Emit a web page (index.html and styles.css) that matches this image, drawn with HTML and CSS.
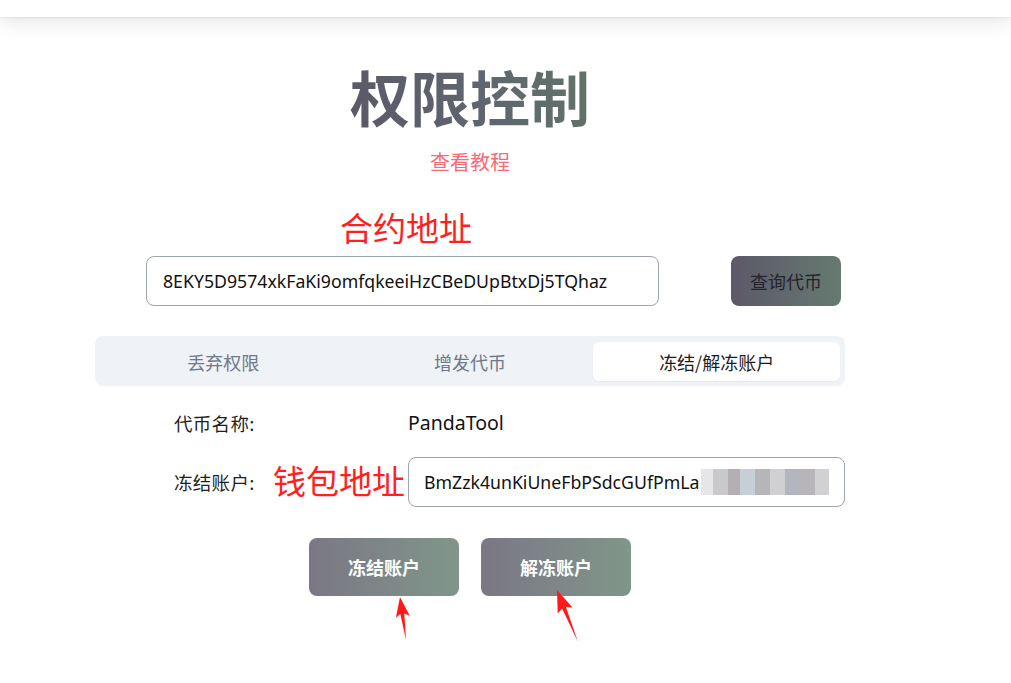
FILE: index.html
```html
<!DOCTYPE html>
<html lang="zh-CN">
<head>
<meta charset="utf-8">
<title>权限控制</title>
<link rel="stylesheet" href="styles.css">
</head>
<body>
<header class="topbar"></header>
<main class="page">
  <h1 class="title">权限控制</h1>
  <a class="tutorial">查看教程</a>

  <div class="query-row">
    <span class="note note-contract">合约地址</span>
    <div class="field field-contract">8EKY5D9574xkFaKi9omfqkeeiHzCBeDUpBtxDj5TQhaz</div>
    <button class="btn-query">查询代币</button>
  </div>

  <nav class="tabs">
    <div class="tab">丢弃权限</div>
    <div class="tab">增发代币</div>
    <div class="tab active">冻结/解冻账户</div>
  </nav>

  <div class="form">
    <div class="label">代币名称:</div>
    <div class="value">PandaTool</div>
    <div class="label">冻结账户:</div>
    <div class="value value-input">
      <span class="note note-wallet">钱包地址</span>
      <div class="field field-wallet">
        <span class="addr">BmZzk4unKiUneFbPSdcGUfPmLa</span>
        <span class="mosaic">
          <i class="m m1"></i><i class="m m2"></i><i class="m m3"></i><i class="m m4"></i><i class="m m5"></i><i class="m m6"></i><i class="m m7"></i><i class="m m8"></i><i class="m m9"></i>
        </span>
      </div>
    </div>
  </div>

  <div class="actions">
    <button class="btn-action">冻结账户</button>
    <button class="btn-action">解冻账户</button>
  </div>
</main>

<svg class="arrows" width="1011" height="683" viewBox="0 0 1011 683">
  <path d="M400 597 L395.9 617.8 L400.3 614.1 L406 640 L404.3 613.5 L409.7 615.8 Z" fill="#ff1a1a"/>
  <path d="M557 590 L557.7 613.5 L562.1 608.4 L578 642 L565.9 606.9 L572.5 607.5 Z" fill="#ff1a1a"/>
</svg>
</body>
</html>
```

FILE: styles.css
```css
* { box-sizing: border-box; }

html, body {
  margin: 0;
  padding: 0;
  background: #ffffff;
}

body {
  font-family: "Noto Sans", "Noto Sans CJK SC", sans-serif;
  color: #1f1f1f;
  position: relative;
  width: 1011px;
  height: 683px;
  overflow: hidden;
}

.topbar {
  height: 17px;
  background: #ffffff;
  box-shadow: 0 1px 2px rgba(0, 0, 0, 0.06), 0 2px 22px rgba(0, 0, 0, 0.14);
  position: relative;
  z-index: 1;
}

.page {
  width: 750px;
  margin-left: 95px;
  display: flex;
  flex-direction: column;
  align-items: center;
}

.title {
  margin: 39px 0 0;
  font-family: "Noto Sans CJK SC", sans-serif;
  font-size: 60px;
  line-height: 80px;
  font-weight: 700;
  letter-spacing: 0;
  background: linear-gradient(75deg, #5b5868 0%, #5f6670 55%, #627367 100%);
  -webkit-background-clip: text;
  background-clip: text;
  color: transparent;
}

.tutorial {
  margin-top: 14px;
  font-family: "Noto Sans CJK SC", sans-serif;
  font-size: 20px;
  line-height: 24px;
  color: #f56c78;
}

.query-row {
  position: relative;
  align-self: stretch;
  display: flex;
  align-items: center;
  gap: 72px;
  padding-left: 51px;
  margin-top: 82px;
}

.note {
  position: absolute;
  font-family: "Noto Sans CJK SC", sans-serif;
  font-size: 33px;
  line-height: 40px;
  color: #ff1f1f;
  white-space: nowrap;
}

.note-contract {
  left: 245px;
  top: -49px;
}

.field {
  height: 50px;
  border: 1px solid #9ea3b0;
  border-radius: 8px;
  background: #fff;
  display: flex;
  align-items: center;
  font-size: 17.7px;
  color: #111;
  white-space: nowrap;
  overflow: hidden;
}

.field-contract {
  width: 513px;
  padding-left: 16px;
}

.btn-query {
  width: 110px;
  height: 50px;
  border: none;
  border-radius: 8px;
  background: linear-gradient(90deg, #5d5869 0%, #667a70 100%);
  font-family: "Noto Sans CJK SC", sans-serif;
  font-size: 18px;
  color: #25232e;
  padding: 0;
}

.tabs {
  align-self: stretch;
  margin-top: 30px;
  height: 50px;
  padding: 6px 5px 5px;
  background: #eff2f7;
  border-radius: 8px;
  display: grid;
  grid-template-columns: 1fr 1fr 1fr;
}

.tab {
  display: flex;
  align-items: center;
  justify-content: center;
  font-family: "Noto Sans CJK SC", sans-serif;
  font-size: 18px;
  color: #707889;
  border-radius: 6px;
}

.tab.active {
  background: #ffffff;
  color: #1c1c1c;
  box-shadow: 0 1px 2px rgba(0, 0, 0, 0.04);
}

.form {
  align-self: stretch;
  display: grid;
  grid-template-columns: 234px 1fr;
  row-gap: 9px;
  padding-left: 79px;
  margin-top: 12px;
  align-items: center;
}

.label {
  font-family: "Noto Sans CJK SC", sans-serif;
  font-size: 18.5px;
  color: #1f1f1f;
  line-height: 50px;
  word-spacing: 0;
  letter-spacing: 0.3px;
}

.value {
  font-size: 19.5px;
  color: #111;
  line-height: 50px;
}

.value-input {
  position: relative;
}

.note-wallet {
  left: -135px;
  top: 3px;
}

.field-wallet {
  width: 437px;
  padding-left: 15px;
  position: relative;
}

.mosaic {
  display: flex;
  height: 26px;
  margin-left: 2px;
}

.m { display: block; height: 26px; }
.m1 { width: 12px; background: #e6e6e8; }
.m2 { width: 15px; background: #c9c9cb; }
.m3 { width: 12px; background: #b3afb2; }
.m4 { width: 15px; background: #c6ced6; }
.m5 { width: 15px; background: #b6b6b9; }
.m6 { width: 15px; background: #d0d0d3; }
.m7 { width: 15px; background: #b3b5bf; }
.m8 { width: 15px; background: #b7b5ba; }
.m9 { width: 14px; background: #d1d1d4; }

.actions {
  display: flex;
  gap: 22px;
  margin-top: 31px;
}

.btn-action {
  width: 150px;
  height: 58px;
  border: none;
  border-radius: 8px;
  background: linear-gradient(90deg, #7b7784 0%, #80968a 100%);
  font-family: "Noto Sans CJK SC", sans-serif;
  font-size: 18px;
  font-weight: 700;
  color: #ffffff;
  padding: 0;
}

.arrows {
  position: absolute;
  left: 0;
  top: 0;
  pointer-events: none;
}
```
